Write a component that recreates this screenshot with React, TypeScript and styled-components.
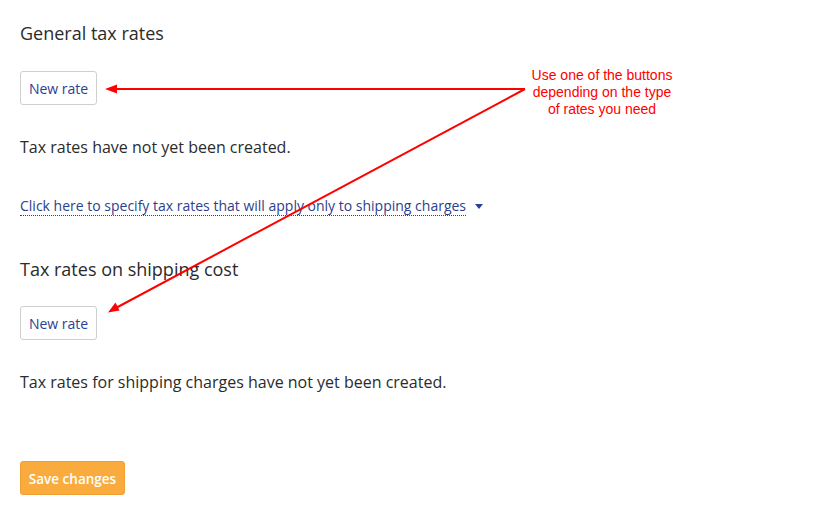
import React from "react";
import styled, { createGlobalStyle } from "styled-components";

const Global = createGlobalStyle`
  html, body { margin: 0; padding: 0; background: #fff; }
  body { font-family: "Open Sans", "Noto Sans", sans-serif; color: #333; }
`;

const Page = styled.div`
  position: relative;
  width: 831px;
  height: 517px;
  padding: 21px 20px 0;
  box-sizing: border-box;
  display: flex;
  flex-direction: column;
  align-items: flex-start;
`;

const Heading = styled.h2<{ $top?: number }>`
  margin: ${(p) => p.$top ?? 0}px 0 0;
  font-size: 18px;
  line-height: 24px;
  font-weight: 400;
  color: #2b2b2b;
`;

const RateButton = styled.button<{ $top: number }>`
  margin-top: ${(p) => p.$top}px;
  height: 34px;
  width: 77px;
  padding: 0;
  background: #fff;
  border: 1px solid #cfcfcf;
  border-radius: 3px;
  font-family: inherit;
  font-size: 14px;
  color: #2d4193;
`;

const Message = styled.p<{ $top: number }>`
  margin: ${(p) => p.$top}px 0 0;
  font-size: 16px;
  line-height: 22px;
  color: #2b2b2b;
`;

const ToggleRow = styled.div`
  margin-top: 37px;
  display: flex;
  align-items: center;
  gap: 9px;
  height: 22px;
`;

const ToggleLink = styled.a`
  font-size: 14px;
  line-height: 19px;
  color: #2d3f8c;
  text-decoration: none;
  border-bottom: 1px dotted #2d3f8c;
`;

const Caret = styled.span`
  width: 0;
  height: 0;
  border-left: 4.5px solid transparent;
  border-right: 4.5px solid transparent;
  border-top: 5px solid #2d4193;
  margin-top: 1px;
`;

const SaveButton = styled.button`
  margin-top: 68px;
  height: 34px;
  width: 105px;
  padding: 1px 0 0;
  background: #f9ab3e;
  border: 1px solid #f0a032;
  border-radius: 3px;
  font-family: inherit;
  font-size: 13.5px;
  font-weight: 600;
  color: #fff;
`;

const Note = styled.div`
  position: absolute;
  left: 511px;
  top: 67px;
  width: 182px;
  font-family: "Liberation Sans", Arial, sans-serif;
  font-size: 14px;
  line-height: 17px;
  color: #ff0000;
  text-align: center;
`;

const Arrows = styled.svg`
  position: absolute;
  left: 0;
  top: 0;
  pointer-events: none;
`;

export default function App() {
  return (
    <>
      <Global />
      <Page>
        <Heading>General tax rates</Heading>
        <RateButton $top={26}>New rate</RateButton>
        <Message $top={31}>Tax rates have not yet been created.</Message>
        <ToggleRow>
          <ToggleLink>Click here to specify tax rates that will apply only to shipping charges</ToggleLink>
          <Caret />
        </ToggleRow>
        <Heading $top={40}>Tax rates on shipping cost</Heading>
        <RateButton $top={25}>New rate</RateButton>
        <Message $top={31}>Tax rates for shipping charges have not yet been created.</Message>
        <SaveButton>Save changes</SaveButton>

        <Note>
          Use one of the buttons
          <br />
          depending on the type
          <br />
          of rates you need
        </Note>
        <Arrows width="831" height="517" viewBox="0 0 831 517">
          <line x1="525" y1="89" x2="114" y2="89" stroke="#ff0000" strokeWidth="2" />
          <polygon points="105,89 117,84.5 117,93.5" fill="#ff0000" />
          <line x1="525" y1="89" x2="114" y2="309" stroke="#ff0000" strokeWidth="2" />
          <polygon points="108,312.5 115.5,302.5 119.6,310.5" fill="#ff0000" />
        </Arrows>
      </Page>
    </>
  );
}
